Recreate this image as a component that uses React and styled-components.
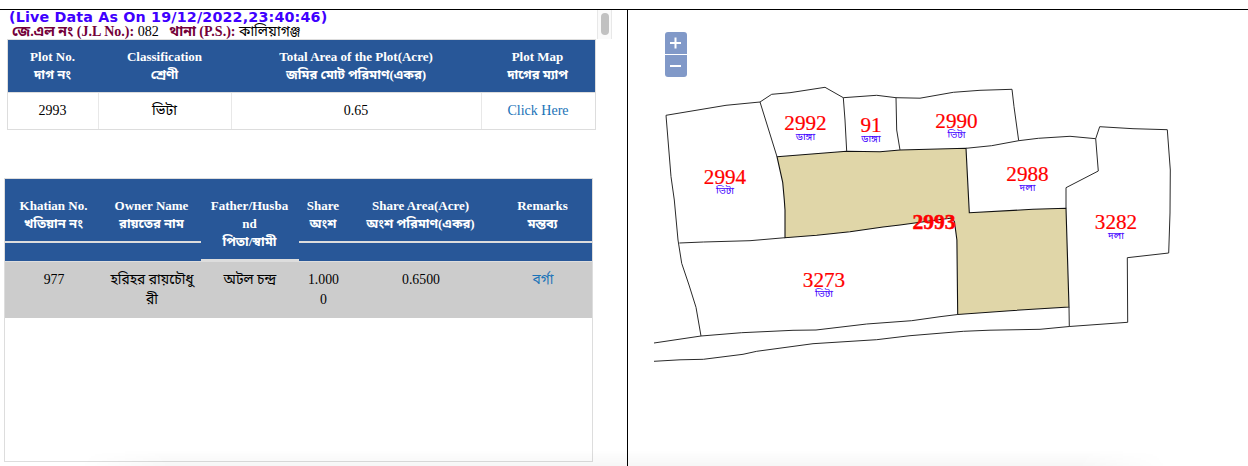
import React from 'react';
import styled, { createGlobalStyle } from 'styled-components';

const Global = createGlobalStyle`
  * { box-sizing: border-box; }
  body {
    margin: 0;
    background: #fff;
    color: #000;
    overflow: hidden;
    font-family: "Liberation Serif", "Noto Sans Bengali", serif;
  }
`;

const Page = styled.div`
  position: relative;
  height: 466px;
  padding-top: 9px;
  overflow: hidden;
`;

const Split = styled.main`
  display: grid;
  grid-template-columns: 628px 1fr;
  height: 457px;
  border-top: 1px solid #000;
`;

const Details = styled.section`
  border-right: 1px solid #000;
  padding-left: 4px;
  overflow: hidden;
`;

const Summary = styled.div`
  display: flex;
  justify-content: space-between;
  height: 29px;
  padding-right: 15px;
`;

const Heading = styled.div`
  white-space: nowrap;
`;

const LiveStamp = styled.h1`
  margin: 0 0 0 5px;
  height: 14px;
  font: 700 14.3px/15px "DejaVu Sans", sans-serif;
  letter-spacing: 0.16px;
  color: #3f00ff;
`;

const Location = styled.p`
  margin: 0 0 0 8px;
  font-size: 14.05px;
  line-height: 15px;
  height: 15px;
  white-space: pre;
`;

const Caption = styled.b`
  color: #730039;
`;

const ScrollTrack = styled.div`
  width: 15px;
  height: 29px;
  padding: 3px 3px 0;
  background: #fafafa;
  border: solid #e8e8e8;
  border-width: 0 1px;
`;

const ScrollThumb = styled.div`
  width: 8px;
  height: 22px;
  border-radius: 4px;
  background: #c1c1c1;
`;

const PlotTable = styled.div`
  width: 589px;
  height: 91px;
  margin-left: 3px;
  border: 1px solid #ddd;
`;

const PlotRow = styled.div`
  display: grid;
  grid-template-columns: 91px 133px 250px 1fr;
`;

const PlotHead = styled(PlotRow)`
  height: 53px;
  padding-top: 8px;
  background: #285798;
  border-bottom: 1px solid #ddd;
  color: #fff;
`;

const HeadCell = styled.div`
  padding-right: 2px;
  text-align: center;
  font-size: 13px;
  font-weight: 700;
  line-height: 18px;
`;

const Line = styled.div`
  height: ${(p) => p.$height}px;
  white-space: nowrap;
`;

const PlotCell = styled.div`
  height: 36px;
  padding-right: 1px;
  line-height: 35px;
  font-size: 14px;
  text-align: center;
  border-right: 1px solid #e8e8e8;
  &:last-child { border-right: 0; }
`;

const Link = styled.a`
  color: #1a73b8;
`;

const OwnerTable = styled.div`
  width: 589px;
  height: 284px;
  margin-top: 48px;
  border: 1px solid #ddd;
`;

const OwnerRow = styled.div`
  display: grid;
  align-items: start;
  grid-template-columns: 98px 98px 98px 49px 146px 1fr;
`;

const OwnerHead = styled(OwnerRow)`
  height: 83px;
  background: #285798;
  border-bottom: 1px solid #ddd;
  color: #fff;
`;

const OwnerHeadCell = styled(HeadCell)`
  height: ${(p) => (p.$tall ? 82 : 64)}px;
  padding: 18px 1px 0 0;
  border-bottom: 2px solid #ddd;
`;

const OwnerBody = styled(OwnerRow)`
  height: 56px;
  padding-top: 8px;
  background: #ccc;
`;

const OwnerCell = styled.div`
  font-size: 13.8px;
  line-height: 20px;
  text-align: center;
`;

const MapPanel = styled.section`
  position: relative;
`;

const MapCanvas = styled.svg`
  display: block;
`;

const ZoomControls = styled.div`
  position: absolute;
  top: 22px;
  left: 37px;
  display: flex;
  flex-direction: column;
  gap: 1px;
`;

const ZoomButton = styled.button`
  display: grid;
  place-items: center;
  width: 22px;
  height: 22px;
  padding: 0;
  border: 0;
  border-radius: ${(p) => (p.$last ? '0 0 3px 3px' : '3px 3px 0 0')};
  background: #8199c8;
`;

const BottomShade = styled.div`
  position: absolute;
  left: 80px;
  right: 80px;
  bottom: 0;
  height: 16px;
  background: linear-gradient(to bottom, rgba(0, 0, 0, 0), rgba(0, 0, 0, 0.035));
  mask-image: linear-gradient(to right, transparent, #000 90px, #000 calc(100% - 90px), transparent);
  pointer-events: none;
`;

const plotHead = [
  ['Plot No.', 'দাগ নং'],
  ['Classification', 'শ্রেণী'],
  ['Total Area of the Plot(Acre)', 'জমির মোট পরিমাণ(একর)'],
  ['Plot Map', 'দাগের ম্যাপ'],
];

const ownerHead = [
  ['Khatian No.', 'খতিয়ান নং'],
  ['Owner Name', 'রায়তের নাম'],
  ['Father/Husba', 'nd', 'পিতা/স্বামী'],
  ['Share', 'অংশ'],
  ['Share Area(Acre)', 'অংশ পরিমাণ(একর)'],
  ['Remarks', 'মন্তব্য'],
];

const owner = [['977'], ['হরিহর রায়চৌধু', 'রী'], ['অটল চন্দ্র'], ['1.000', '0'], ['0.6500']];

const selectedPlot =
  '777,156.7 846.7,151.3 880,151.7 900,150 966,148.3 969.3,212.7 1033,209.3 1066,208.3 1069,307 1010,310.7 957.7,314.5 956.9,240 954.5,222 952,218 936.7,220 900,225 883,227 850,231.7 816.7,235.3 785,237.7 785,210 784.3,200 782.7,182.3';

const boundaries = [
  '760,102 726,105.3 666,115.3 671,176.7 674.3,200 678,240 681.7,263.3 689,285 696,307.3 701,336',
  '760,102 777,156.7',
  '760,102 771.7,94.3 790,92.7 825,87.3 843.3,97.7 876.7,95.3 896,97.7 920,98.2 953.3,92.3 980,90.3 1012,89.3 1014,106.7 1018.7,140.7',
  '843.3,97.7 845,120 846.7,151.3',
  '896,97.7 896.7,130 900,150',
  '966,148.3 991.7,145.7 1018.7,140.7 1038.3,138.3 1070,136.3 1095.7,138.7 1098.3,171 1066,187.7 1066,208.3',
  '1095.7,138.7 1099.7,126.7 1133,128.7 1167.3,129.7 1170.3,170 1170,213 1168.7,253 1127.3,257.7 1127.7,322.3 1069.3,326.5 1069,307',
  '679.3,243 703.3,242 750,240.7 785,237.7',
  '654,343 701,336 741.7,332.7 793,330.3 816,330 866.7,324 911.7,320.7 940,316.7 957.7,314.5',
  '654,361.3 680,359.8 703.3,359.3 743,354.3 756.7,351.3 813,343.7 876.7,339.7 910,335.7 963.3,331.3 990,330.2 1040,329.3 1069.3,326.5',
];

const plots = [
  ['2994', 'ভিটা', 725, 184],
  ['2992', 'ডাঙ্গা', 805.5, 130],
  ['91', 'ডাঙ্গা', 871, 132],
  ['2990', 'ভিটা', 956.5, 128],
  ['2988', 'দলা', 1027.5, 181],
  ['3282', 'দলা', 1116, 229],
  ['3273', 'ভিটা', 824, 287],
];

const Lines = ({ items, height = 18 }) => items.map((t) => <Line key={t} $height={height}>{t}</Line>);

export default function App() {
  return (
    <Page>
      <Global />
      <Split>
        <Details>
          <Summary>
            <Heading>
              <LiveStamp>(Live Data As On 19/12/2022,23:40:46)</LiveStamp>
              <Location>
                <Caption>জে.এল নং (J.L No.):</Caption>
                {' 082   '}
                <Caption>থানা (P.S.):</Caption>
                {' কালিয়াগঞ্জ'}
              </Location>
            </Heading>
            <ScrollTrack>
              <ScrollThumb />
            </ScrollTrack>
          </Summary>
          <PlotTable>
            <PlotHead>
              {plotHead.map((c) => (
                <HeadCell key={c[0]}><Lines items={c} /></HeadCell>
              ))}
            </PlotHead>
            <PlotRow>
              <PlotCell>2993</PlotCell>
              <PlotCell>ভিটা</PlotCell>
              <PlotCell>0.65</PlotCell>
              <PlotCell><Link>Click Here</Link></PlotCell>
            </PlotRow>
          </PlotTable>
          <OwnerTable>
            <OwnerHead>
              {ownerHead.map((c) => (
                <OwnerHeadCell key={c[0]} $tall={c.length > 2}><Lines items={c} /></OwnerHeadCell>
              ))}
            </OwnerHead>
            <OwnerBody>
              {owner.map((c) => (
                <OwnerCell key={c[0]}><Lines items={c} height={20} /></OwnerCell>
              ))}
              <OwnerCell><Link>বর্গা</Link></OwnerCell>
            </OwnerBody>
          </OwnerTable>
        </Details>
        <MapPanel>
          <MapCanvas width="620" height="456" viewBox="628 10 620 456">
            <polygon points={selectedPlot} fill="#e0d6a8" stroke="#111" strokeWidth="1.1" />
            {boundaries.map((b) => (
              <polyline key={b} points={b} fill="none" stroke="#2a2a2a" strokeWidth="1" />
            ))}
            <g textAnchor="middle">
              {plots.map(([no, kind, x, y]) => (
                <g key={no}>
                  <text x={x} y={y} fontSize="21.2" fill="#f00" stroke="#f00" strokeWidth="0.2">{no}</text>
                  <text x={x} y={y + 9.7} fontSize="10.2" fill="#3f00ff">{kind}</text>
                </g>
              ))}
              <text x="934" y="229" fontSize="21.6" fontWeight="700" fill="#f00" stroke="#f00" strokeWidth="0.5">2993</text>
            </g>
          </MapCanvas>
          <ZoomControls>
            <ZoomButton aria-label="Zoom in">
              <svg width="12" height="12" viewBox="0 0 12 12" stroke="#fff" strokeWidth="2">
                <path d="M0 6h11M5.5 0.5v11" />
              </svg>
            </ZoomButton>
            <ZoomButton $last aria-label="Zoom out">
              <svg width="12" height="12" viewBox="0 0 12 12" stroke="#fff" strokeWidth="2">
                <path d="M0 6h11" />
              </svg>
            </ZoomButton>
          </ZoomControls>
        </MapPanel>
      </Split>
      <BottomShade />
    </Page>
  );
}
